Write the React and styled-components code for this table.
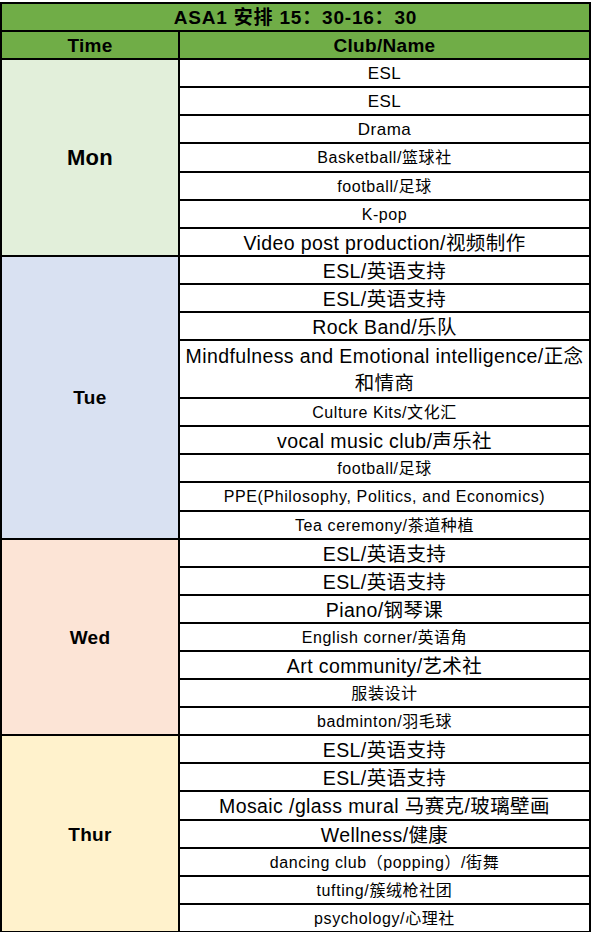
import React from "react";
import styled, { createGlobalStyle } from "styled-components";

const GlobalStyle = createGlobalStyle`
  html, body {
    margin: 0;
    padding: 0;
    background: #ffffff;
  }
  body {
    font-family: "Liberation Sans", "Noto Sans CJK SC", sans-serif;
    color: #000000;
  }
`;

const ROW = 28.1;

const Page = styled.div`
  padding-top: 2px;
  width: 592px;
`;

const Sheet = styled.table`
  width: 591px;
  border-collapse: separate;
  border-spacing: 0;
  border-top: 2px solid #000;
  border-left: 2px solid #000;
  table-layout: fixed;
`;

const Col = styled.col`
  width: ${(p) => p.$w};
`;

const Cell = styled.td`
  box-sizing: border-box;
  height: ${ROW}px;
  border-right: 2px solid #000;
  border-bottom: 2px solid #000;
  padding: 2px 2px 0;
  text-align: center;
  vertical-align: middle;
  white-space: nowrap;
  line-height: ${ROW - 4}px;
`;

const TitleCell = styled(Cell)`
  background: #70ad47;
  font-weight: 700;
  font-size: 19px;
  letter-spacing: ${(p) => (p.$wide ? "0.8px" : "0.3px")};
`;

const DayCell = styled(Cell)`
  background: ${(p) => p.$bg};
  font-weight: 700;
  font-size: ${(p) => (p.$big ? "22px" : "19px")};
  letter-spacing: 0.3px;
`;

const sizes = {
  lg: { font: "19.5px", space: "0.4px" },
  md: { font: "17px", space: "0.5px" },
  sm: { font: "16px", space: "0.6px" },
};

const ClubCell = styled(Cell)`
  height: ${(p) => (p.$tall ? ROW * 2 : ROW)}px;
  font-size: ${(p) => sizes[p.$size].font};
  letter-spacing: ${(p) => sizes[p.$size].space};
  line-height: ${(p) => (p.$tall ? "27px" : `${ROW - 4}px`)};
`;

const days = [
  {
    name: "Mon",
    bg: "#e2efda",
    big: true,
    clubs: [
      ["ESL", "md"],
      ["ESL", "md"],
      ["Drama", "md"],
      ["Basketball/篮球社", "sm"],
      ["football/足球", "sm"],
      ["K-pop", "sm"],
      ["Video post production/视频制作", "lg"],
    ],
  },
  {
    name: "Tue",
    bg: "#d9e1f2",
    clubs: [
      ["ESL/英语支持", "lg"],
      ["ESL/英语支持", "lg"],
      ["Rock Band/乐队", "lg"],
      [["Mindfulness and Emotional intelligence/正念", "和情商"], "lg", true],
      ["Culture Kits/文化汇", "sm"],
      ["vocal music club/声乐社", "lg"],
      ["football/足球", "sm"],
      ["PPE(Philosophy, Politics, and Economics)", "sm"],
      ["Tea ceremony/茶道种植", "sm"],
    ],
  },
  {
    name: "Wed",
    bg: "#fce4d6",
    clubs: [
      ["ESL/英语支持", "lg"],
      ["ESL/英语支持", "lg"],
      ["Piano/钢琴课", "lg"],
      ["English corner/英语角", "sm"],
      ["Art community/艺术社", "lg"],
      ["服装设计", "sm"],
      ["badminton/羽毛球", "sm"],
    ],
  },
  {
    name: "Thur",
    bg: "#fff2cc",
    clubs: [
      ["ESL/英语支持", "lg"],
      ["ESL/英语支持", "lg"],
      ["Mosaic /glass mural 马赛克/玻璃壁画", "lg"],
      ["Wellness/健康", "lg"],
      ["dancing club（popping）/街舞", "sm"],
      ["tufting/簇绒枪社团", "sm"],
      ["psychology/心理社", "sm"],
    ],
  },
];

const ClubText = ({ text }) =>
  Array.isArray(text) ? (
    <>
      {text[0]}
      <br />
      {text[1]}
    </>
  ) : (
    text
  );

export default function App() {
  return (
    <Page>
      <GlobalStyle />
      <Sheet>
        <colgroup>
          <Col $w="178px" />
          <Col $w="411px" />
        </colgroup>
        <tbody>
          <tr>
            <TitleCell colSpan={2} $wide>
              ASA1 安排 15：30-16：30
            </TitleCell>
          </tr>
          <tr>
            <TitleCell>Time</TitleCell>
            <TitleCell>Club/Name</TitleCell>
          </tr>
          {days.map((day) =>
            day.clubs.map(([text, size, tall], i) => (
              <tr key={day.name + i}>
                {i === 0 && (
                  <DayCell
                    rowSpan={day.clubs.length}
                    $bg={day.bg}
                    $big={day.big}
                  >
                    {day.name}
                  </DayCell>
                )}
                <ClubCell $size={size} $tall={tall}>
                  <ClubText text={text} />
                </ClubCell>
              </tr>
            ))
          )}
        </tbody>
      </Sheet>
    </Page>
  );
}
